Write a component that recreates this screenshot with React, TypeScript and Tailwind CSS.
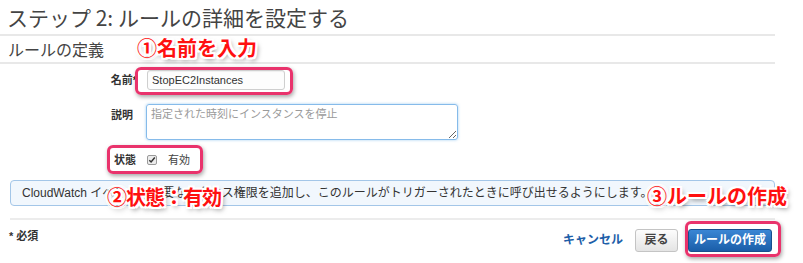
import React from "react";

function Check() {
  return (
    <span className="inline-flex h-[10px] w-[10px] items-center justify-center rounded-[2px] border border-[#9a9a9a] bg-[#ececec]">
      <svg width="8" height="8" viewBox="0 0 8 8">
        <path d="M1.3 4.2 L3.1 6 L6.8 1.6" fill="none" stroke="#333" strokeWidth="1.5" />
      </svg>
    </span>
  );
}

export default function App() {
  const note =
    "absolute whitespace-nowrap font-bold text-[#ff1010] text-[20px] leading-[22px] [font-family:'Noto_Sans_CJK_JP',sans-serif] [text-shadow:-2px_-2px_0_#fff,2px_-2px_0_#fff,-2px_2px_0_#fff,2px_2px_0_#fff,0_2px_0_#fff,0_-2px_0_#fff,2px_0_0_#fff,-2px_0_0_#fff,2px_3px_5px_rgba(0,0,0,0.55)]";
  return (
    <div className="relative h-[263px] w-[803px] overflow-hidden bg-white text-[#333] [font-family:'Liberation_Sans','Noto_Sans_CJK_JP',sans-serif]">
      <div className="w-[775px]">
        <div className="h-[36px] border-b-2 border-[#e8e8e8] pl-[7px] pt-[1px] text-[21px] leading-[33px] text-[#444] [font-family:'Noto_Sans_CJK_JP',sans-serif]">
          ステップ 2: ルールの詳細を設定する
        </div>
        <div className="h-[28px] border-b-2 border-[#e8e8e8] pl-[8px] text-[16px] leading-[26px] text-[#444] [font-family:'Noto_Sans_CJK_JP',sans-serif]">
          ルールの定義
        </div>

        {/* form */}
        <div className="pt-[6px]">
          <div className="flex h-[20px] items-center">
            <div className="w-[137px] text-right text-[11px] font-bold text-[#333]">名前*</div>
            <input
              readOnly
              value="StopEC2Instances"
              className="ml-[10px] h-[20px] w-[138px] rounded-[3px] border border-[#cfcfcf] bg-[#fdfdfd] px-[4px] text-[11px] text-[#333] shadow-[inset_0_1px_1px_rgba(0,0,0,0.06)] outline-none"
            />
          </div>
          <div className="mt-[14px] flex">
            <div className="w-[133px] pt-[4px] text-right text-[11px] font-bold leading-[14px] text-[#333]">説明</div>
            <textarea
              placeholder="指定された時刻にインスタンスを停止"
              className="ml-[13px] h-[36px] w-[312px] resize-y rounded-[3px] border border-[#86bbea] px-[4px] py-[2px] text-[11px] leading-[15px] text-[#333] shadow-[0_0_3px_rgba(102,175,233,0.6)] outline-none placeholder:text-[#9a9a9a]"
            />
          </div>
          <div className="mt-[10px] flex h-[20px] items-center">
            <div className="w-[136px] text-right text-[11px] font-bold text-[#333]">状態</div>
            <div className="ml-[11px] flex items-center">
              <Check />
            </div>
            <div className="ml-[11px] text-[11px] text-[#444]">有効</div>
          </div>
        </div>

        <div className="ml-[10px] mt-[10px] flex h-[26px] items-center overflow-hidden whitespace-nowrap rounded-[4px] border border-[#a3c6e8] bg-[#f1f7fd] pl-[11px] text-[12px] text-[#333]">
          CloudWatch イベントに必要なアクセス権限を追加し、このルールがトリガーされたときに呼び出せるようにします。
        </div>

        <div className="ml-[10px] mt-[12px] border-t-2 border-[#ececec]" />

        <div className="flex h-[40px] items-center pl-[9px]">
          <div className="-mt-[8px] text-[11px] font-bold text-[#333]">* 必須</div>
          <div className="ml-auto mr-[3px] flex items-center">
            <span className="text-[12px] font-bold text-[#1d5ea8]">キャンセル</span>
            <button className="ml-[12px] h-[23px] w-[43px] rounded-[3px] border border-[#c4c4c4] bg-gradient-to-b from-[#fdfdfd] to-[#e4e4e4] text-[12px] font-bold text-[#444]">
              戻る
            </button>
            <button className="ml-[10px] h-[23px] w-[84px] rounded-[3px] border border-[#174f8d] bg-gradient-to-b from-[#3a86d4] to-[#1a5ea9] text-[12px] font-bold text-white">
              ルールの作成
            </button>
          </div>
        </div>
      </div>

      {/* highlight boxes */}
      <div className="absolute left-[135px] top-[67px] h-[28px] w-[158px] rounded-[6px] border-[3px] border-[#e9336c] shadow-[1px_2px_4px_rgba(0,0,0,0.35)]" />
      <div className="absolute left-[107px] top-[145px] h-[29px] w-[96px] rounded-[6px] border-[3px] border-[#e9336c] shadow-[1px_2px_4px_rgba(0,0,0,0.35)]" />
      <div className="absolute left-[685px] top-[221px] h-[36px] w-[96px] rounded-[6px] border-[3px] border-[#e9336c] shadow-[1px_2px_4px_rgba(0,0,0,0.35)]" />

      {/* annotations */}
      <div className={note + " left-[137px] top-[37px]"}>①名前を入力</div>
      <div className={note + " left-[107px] top-[186px] tracking-[-1px]"}>②状態：有効</div>
      <div className={note + " left-[647px] top-[185px]"}>③ルールの作成</div>
    </div>
  );
}
